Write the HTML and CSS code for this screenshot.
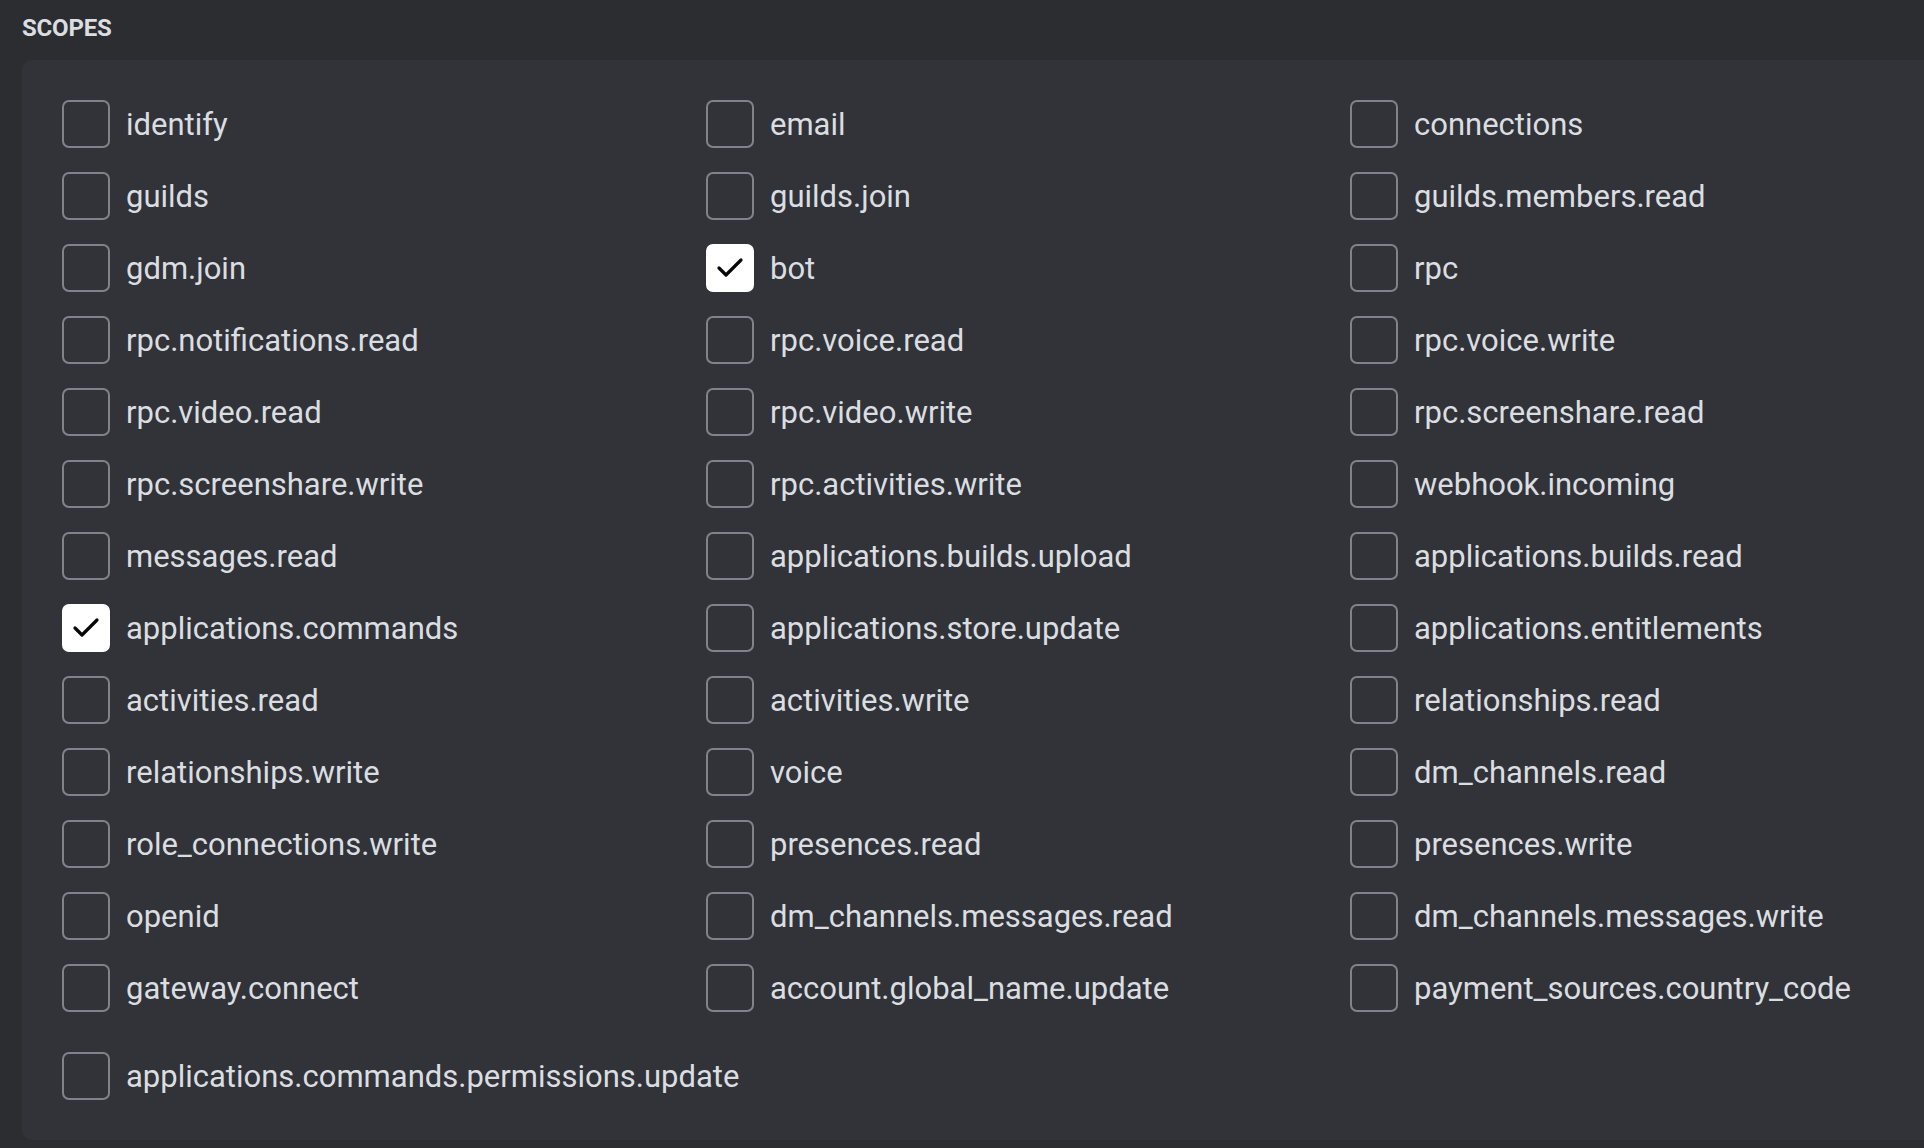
FILE: index.html
```html
<!DOCTYPE html>
<html lang="en">
<head>
<meta charset="utf-8">
<title>Scopes</title>
<link rel="stylesheet" href="styles.css">
</head>
<body>
<div class="page">
  <h2 class="section-title">SCOPES</h2>
  <div class="panel">
    <div class="grid">
      <label class="scope"><span class="box"></span><span class="name">identify</span></label>
      <label class="scope"><span class="box"></span><span class="name">email</span></label>
      <label class="scope"><span class="box"></span><span class="name">connections</span></label>
      <label class="scope"><span class="box"></span><span class="name">guilds</span></label>
      <label class="scope"><span class="box"></span><span class="name">guilds.join</span></label>
      <label class="scope"><span class="box"></span><span class="name">guilds.members.read</span></label>
      <label class="scope"><span class="box"></span><span class="name">gdm.join</span></label>
      <label class="scope"><span class="box checked"><svg viewBox="0 0 48 48" class="tick"><polyline points="13,24 20,31 35,16"/></svg></span><span class="name">bot</span></label>
      <label class="scope"><span class="box"></span><span class="name">rpc</span></label>
      <label class="scope"><span class="box"></span><span class="name">rpc.notifications.read</span></label>
      <label class="scope"><span class="box"></span><span class="name">rpc.voice.read</span></label>
      <label class="scope"><span class="box"></span><span class="name">rpc.voice.write</span></label>
      <label class="scope"><span class="box"></span><span class="name">rpc.video.read</span></label>
      <label class="scope"><span class="box"></span><span class="name">rpc.video.write</span></label>
      <label class="scope"><span class="box"></span><span class="name">rpc.screenshare.read</span></label>
      <label class="scope"><span class="box"></span><span class="name">rpc.screenshare.write</span></label>
      <label class="scope"><span class="box"></span><span class="name">rpc.activities.write</span></label>
      <label class="scope"><span class="box"></span><span class="name">webhook.incoming</span></label>
      <label class="scope"><span class="box"></span><span class="name">messages.read</span></label>
      <label class="scope"><span class="box"></span><span class="name">applications.builds.upload</span></label>
      <label class="scope"><span class="box"></span><span class="name">applications.builds.read</span></label>
      <label class="scope"><span class="box checked"><svg viewBox="0 0 48 48" class="tick"><polyline points="13,24 20,31 35,16"/></svg></span><span class="name">applications.commands</span></label>
      <label class="scope"><span class="box"></span><span class="name">applications.store.update</span></label>
      <label class="scope"><span class="box"></span><span class="name">applications.entitlements</span></label>
      <label class="scope"><span class="box"></span><span class="name">activities.read</span></label>
      <label class="scope"><span class="box"></span><span class="name">activities.write</span></label>
      <label class="scope"><span class="box"></span><span class="name">relationships.read</span></label>
      <label class="scope"><span class="box"></span><span class="name">relationships.write</span></label>
      <label class="scope"><span class="box"></span><span class="name">voice</span></label>
      <label class="scope"><span class="box"></span><span class="name">dm_channels.read</span></label>
      <label class="scope"><span class="box"></span><span class="name">role_connections.write</span></label>
      <label class="scope"><span class="box"></span><span class="name">presences.read</span></label>
      <label class="scope"><span class="box"></span><span class="name">presences.write</span></label>
      <label class="scope"><span class="box"></span><span class="name">openid</span></label>
      <label class="scope"><span class="box"></span><span class="name">dm_channels.messages.read</span></label>
      <label class="scope"><span class="box"></span><span class="name">dm_channels.messages.write</span></label>
      <label class="scope"><span class="box"></span><span class="name">gateway.connect</span></label>
      <label class="scope"><span class="box"></span><span class="name">account.global_name.update</span></label>
      <label class="scope"><span class="box"></span><span class="name">payment_sources.country_code</span></label>
    </div>
    <div class="extra">
      <label class="scope"><span class="box"></span><span class="name">applications.commands.permissions.update</span></label>
    </div>
  </div>
</div>
</body>
</html>
```

FILE: styles.css
```css
* { box-sizing: border-box; }
html, body {
  margin: 0;
  padding: 0;
  background: #2b2d31;
  height: 100%;
  overflow: hidden;
}
.page {
  padding: 0 0 0 22px;
  font-family: Roboto, "Noto Sans", sans-serif;
  color: #dbdee1;
}
.section-title {
  margin: 0;
  height: 60px;
  padding-top: 13px;
  font-size: 24px;
  font-weight: 700;
  line-height: 30px;
  color: #dbdee1;
  letter-spacing: -0.2px;
}
.panel {
  background: #313338;
  border-radius: 10px 0 0 10px;
  padding: 40px 0 40px 40px;
  height: 1080px;
}
.grid {
  display: grid;
  grid-template-columns: repeat(3, 644px);
  row-gap: 24px;
}
.extra {
  margin-top: 40px;
}
.scope {
  display: flex;
  align-items: center;
  gap: 16px;
  height: 48px;
}
.box {
  width: 48px;
  height: 48px;
  flex: none;
  border: 2.5px solid #80838b;
  border-radius: 7px;
  display: flex;
  align-items: center;
  justify-content: center;
}
.box.checked {
  background: #ffffff;
  border-color: #ffffff;
}
.tick {
  width: 48px;
  height: 48px;
  flex: none;
  margin: -2.5px;
}
.tick polyline {
  fill: none;
  stroke: #060607;
  stroke-width: 3.2;
  stroke-linecap: round;
  stroke-linejoin: round;
}
.name {
  font-size: 31px;
  line-height: 40px;
  padding-top: 2px;
  color: #dbdee1;
  white-space: nowrap;
}
```
